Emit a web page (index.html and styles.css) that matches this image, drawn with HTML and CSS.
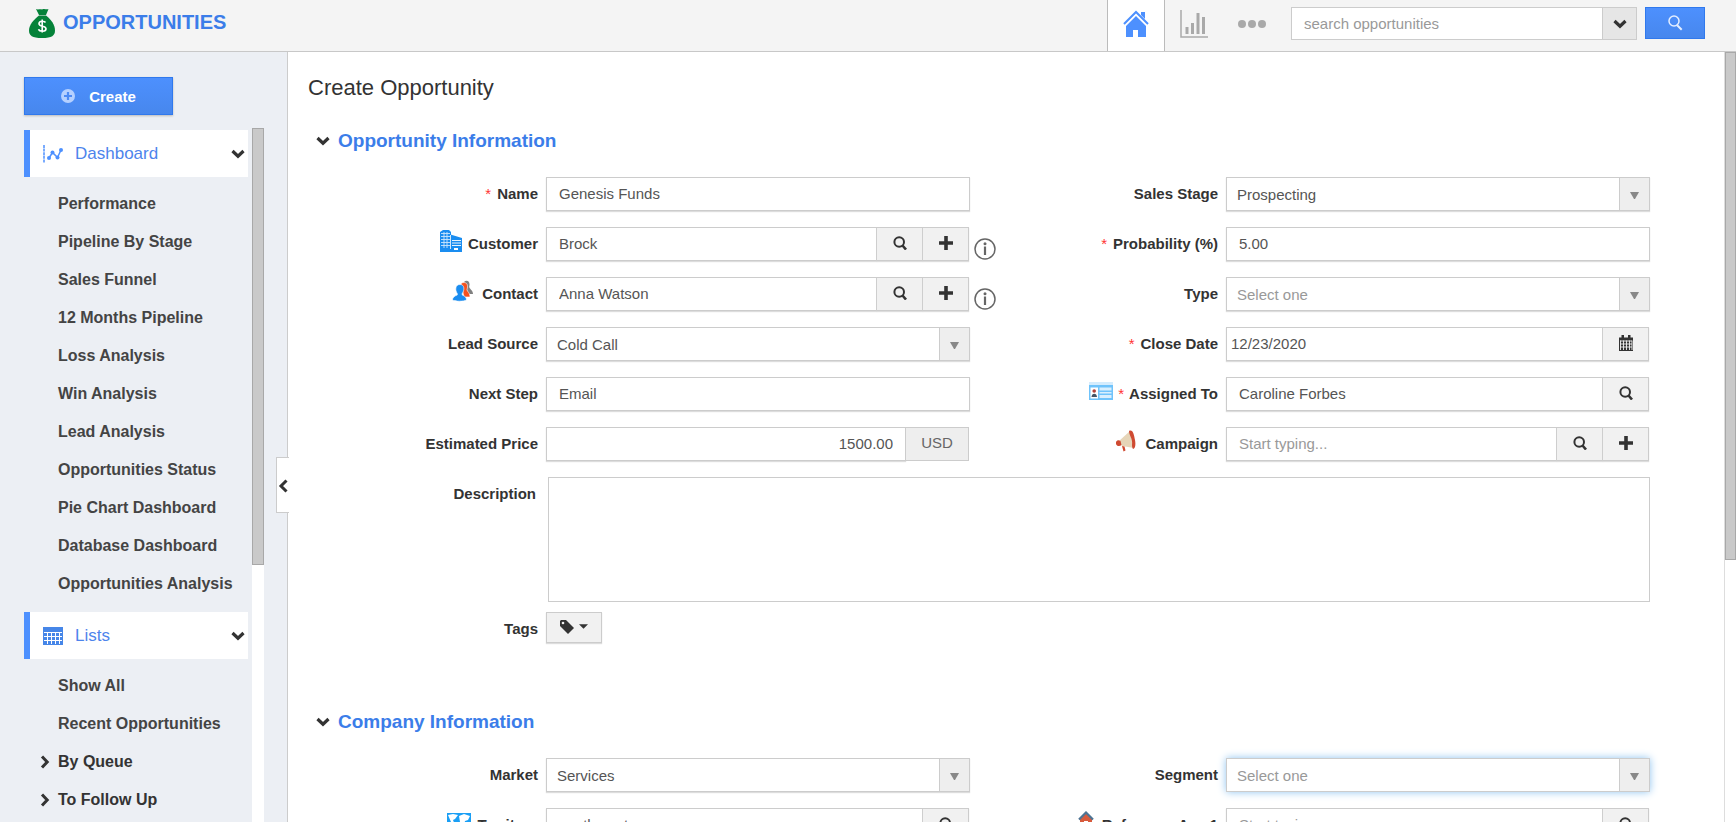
FILE: index.html
```html
<!DOCTYPE html>
<html lang="en">
<head>
<meta charset="utf-8">
<title>Create Opportunity</title>
<link rel="stylesheet" href="styles.css">
</head>
<body>
<svg class="sprite" aria-hidden="true">
  <symbol id="down" viewBox="0 0 14 10"><path d="M1.5 2 7 7.2 12.500 2" fill="none" stroke="#333" stroke-width="3.200"/></symbol>
  <symbol id="right" viewBox="0 0 10 14"><path d="M2 1.500 7.200 7 2 12.500" fill="none" stroke="#333" stroke-width="3"/></symbol>
  <symbol id="find" viewBox="0 0 14 14"><circle cx="6.200" cy="6" r="4.800" fill="none" stroke="#333" stroke-width="2"/><path d="m9.500 9.500 3.500 4" stroke="#333" stroke-width="2.600"/></symbol>
  <symbol id="plus" viewBox="0 0 14 14"><path d="M7 0v14M0 7h14" stroke="#333" stroke-width="3.600"/></symbol>
  <symbol id="info" viewBox="0 0 22 22"><circle cx="11" cy="11" r="10" fill="none" stroke="#666" stroke-width="1.500"/><circle cx="11" cy="5.800" r="1.500" fill="#666"/><path d="M11 8.500V17" stroke="#666" stroke-width="2.200"/></symbol>
</svg>
<header class="topbar">
  <div class="brand">
    <svg class="bag" viewBox="0 0 26 30"><path d="M7 1c2 1 3 0 6 .4C16 0 17 2 19.500 1L17 7H10z" fill="#058239"/><path d="M10 7.500h7c5 4 9 9 9 15 0 5-3 7.500-13 7.500S0 27.500 0 22.500c0-6 5-11 10-15z" fill="#058239"/><path d="M16.500 14.500c-1-1.800-6.500-2-6.500 1.200 0 3.300 7 1.800 7 5 0 3.400-6.500 3.300-7.500.6M13.200 11.500v13" fill="none" stroke="#fff" stroke-width="1.600"/></svg>
    <span class="brand-name">OPPORTUNITIES</span>
  </div>
  <nav class="tabs">
    <a class="tab active" href="#" aria-label="Home"><svg class="i-home" viewBox="0 0 28 28"><path d="m2 14 12-12 12 12" fill="none" stroke="#4d90fe" stroke-width="2"/><path d="M19 2h4v7l-4-4z" fill="#4d90fe"/><path d="M14 6 4 16v11h7v-7h5v7h8V16z" fill="#4d90fe"/></svg></a>
    <a class="tab" href="#" aria-label="Reports"><svg class="i-home" viewBox="0 0 28 28"><path d="M1 0v27h27" fill="none" stroke="#a9a9a9" stroke-width="1.500"/><path d="M7 24v-7M12.500 24V13M18 24V3M23.500 24V7" stroke="#a9a9a9" stroke-width="3"/></svg></a>
    <a class="tab" href="#" aria-label="More"><svg class="i-home" viewBox="0 0 28 28"><g fill="#a9a9a9"><circle cx="4" cy="14" r="4"/><circle cx="14" cy="14" r="4"/><circle cx="24" cy="14" r="4"/></g></svg></a>
  </nav>
  <form class="search">
    <input type="text" class="search-input" placeholder="search opportunities" aria-label="Search opportunities">
    <button type="button" class="search-menu" aria-label="Search options"><svg class="i-down" viewBox="0 0 14 10"><use href="#down"/></svg></button>
    <button type="button" class="search-go" aria-label="Search"><svg class="i-16" viewBox="0 0 16 16"><circle cx="7" cy="6" r="5" fill="none" stroke="#e4eeff" stroke-width="1.500"/><path d="m10.200 10.200 4.500 4.500" stroke="#e4eeff" stroke-width="2"/></svg></button>
  </form>
</header>
<div class="body">
  <aside class="sidebar">
    <button type="button" class="create"><svg class="i-14" viewBox="0 0 14 14"><circle cx="7" cy="7" r="7" fill="#b5d0ff"/><path d="M7 3v8M3 7h8" stroke="#4d8bf5" stroke-width="2.200"/></svg>Create</button>
    <div class="menu-scroll">
      <nav class="menu">
        <a class="group" href="#"><svg class="i-20" viewBox="0 0 20 20"><path d="M1 1v18" stroke="#4d90fe" stroke-width="1.500" stroke-dasharray="3 .6"/><path d="m6 14 3.500-5.500 5 5L18 6" fill="none" stroke="#4d90fe" stroke-width="1.500"/><g fill="#4d90fe"><circle cx="6" cy="14" r="2"/><circle cx="9.500" cy="8.500" r="2"/><circle cx="14.500" cy="13.500" r="2"/><circle cx="18" cy="6" r="2"/></g></svg><span class="group-name">Dashboard</span><svg class="i-down" viewBox="0 0 14 10"><use href="#down"/></svg></a>
        <div class="items">
          <a class="item" href="#">Performance</a>
          <a class="item" href="#">Pipeline By Stage</a>
          <a class="item" href="#">Sales Funnel</a>
          <a class="item" href="#">12 Months Pipeline</a>
          <a class="item" href="#">Loss Analysis</a>
          <a class="item" href="#">Win Analysis</a>
          <a class="item" href="#">Lead Analysis</a>
          <a class="item" href="#">Opportunities Status</a>
          <a class="item" href="#">Pie Chart Dashboard</a>
          <a class="item" href="#">Database Dashboard</a>
          <a class="item" href="#">Opportunities Analysis</a>
        </div>
        <a class="group" href="#"><svg class="i-20" viewBox="0 0 20 20"><path d="M0 1h20v18H0z" fill="#4686e8"/><path d="M1 6.500h18M1 10.500h18M1 14.500h18M4.500 6v12M8.500 6v12M12.500 6v12M16.500 6v12" stroke="#fff" stroke-width="1"/></svg><span class="group-name">Lists</span><svg class="i-down" viewBox="0 0 14 10"><use href="#down"/></svg></a>
        <div class="items">
          <a class="item" href="#">Show All</a>
          <a class="item" href="#">Recent Opportunities</a>
          <a class="item parent" href="#"><svg class="i-right" viewBox="0 0 10 14"><use href="#right"/></svg>By Queue</a>
          <a class="item parent" href="#"><svg class="i-right" viewBox="0 0 10 14"><use href="#right"/></svg>To Follow Up</a>
        </div>
      </nav>
      <div class="track side-track"><div class="thumb side-thumb"></div></div>
    </div>
    <button type="button" class="collapse" aria-label="Collapse sidebar"><svg class="i-right" viewBox="0 0 10 14"><path d="M8.500 1.500 3 7l5.500 5.500" fill="none" stroke="#333" stroke-width="3"/></svg></button>
  </aside>
  <main class="main">
    <form class="content">
      <h1 class="title">Create Opportunity</h1>
      <h2 class="section"><svg class="i-down" viewBox="0 0 14 10"><use href="#down"/></svg>Opportunity Information</h2>
      <div class="grid">
        <div class="row"><label class="label" for="name"><span class="req">*</span>Name</label><div class="control"><input class="input" id="name" type="text" value="Genesis Funds"></div></div>
        <div class="row"><label class="label" for="stage">Sales Stage</label><div class="control"><select class="input" id="stage"><option>Prospecting</option></select></div></div>

        <div class="row"><label class="label" for="customer"><svg class="i-22" viewBox="0 0 22 22"><path d="M0 2 3 0h6l2 2v19H0z" fill="#1a8df0"/><path d="M1 3.500h9M1 6.500h9M1 9.500h9M1 12.500h9M1 15.500h9M4 2v16M7 2v16" stroke="#cbe5fc" stroke-width=".9"/><path d="M10.500 4.500 22 8v13H10.500z" fill="#1a8df0"/><path d="M12 10.500h9M12 13h9M12 15.500h9" stroke="#e6f3fe" stroke-width="1"/><path d="M10.500 5v14" stroke="#fff" stroke-width=".8"/><path d="M14 18h4v3h-4z" fill="#fff"/><path d="M0 20h22v2H0z" fill="#1a8df0"/></svg>Customer</label><div class="control joined"><input class="input" id="customer" type="text" value="Brock"><button type="button" class="addon" aria-label="Find customer"><svg class="i-14" viewBox="0 0 14 14"><use href="#find"/></svg></button><button type="button" class="addon" aria-label="Add customer"><svg class="i-14" viewBox="0 0 14 14"><use href="#plus"/></svg></button><a class="hint" href="#" aria-label="Customer details"><svg class="i-22" viewBox="0 0 22 22"><use href="#info"/></svg></a></div></div>
        <div class="row"><label class="label" for="prob"><span class="req">*</span>Probability (%)</label><div class="control"><input class="input" id="prob" type="text" value="5.00"></div></div>

        <div class="row"><label class="label spaced" for="contact"><svg class="i-22" viewBox="0 0 22 22"><g fill="#808080"><ellipse cx="14.500" cy="4.500" rx="3" ry="3.800"/><path d="M14.500 7 17 6c0 3 4 4 4 8h-5z"/></g><g fill="#f4511e" stroke="#fff" stroke-width=".6"><path d="M12 2.500c3.500 0 4.200 3.500 3 7 0 2 3 3 3 7.500h-6L9 4c.5-1 1.500-1.500 3-1.500z"/></g><g fill="#1a8df0" stroke="#fff" stroke-width=".6"><path d="M8 4.500c5 0 4.500 6 2.200 9v1.500c2.800 1 4.300 2.500 4.300 5-3 1.600-11.500 1.600-14 0 0-2.500 2-4 4.800-5v-1.500C3 10.500 3 4.500 8 4.500z"/></g></svg>Contact</label><div class="control joined"><input class="input" id="contact" type="text" value="Anna Watson"><button type="button" class="addon" aria-label="Find contact"><svg class="i-14" viewBox="0 0 14 14"><use href="#find"/></svg></button><button type="button" class="addon" aria-label="Add contact"><svg class="i-14" viewBox="0 0 14 14"><use href="#plus"/></svg></button><a class="hint" href="#" aria-label="Contact details"><svg class="i-22" viewBox="0 0 22 22"><use href="#info"/></svg></a></div></div>
        <div class="row"><label class="label" for="type">Type</label><div class="control"><select class="input empty" id="type"><option>Select one</option></select></div></div>

        <div class="row"><label class="label" for="lead">Lead Source</label><div class="control"><select class="input" id="lead"><option>Cold Call</option></select></div></div>
        <div class="row"><label class="label" for="close"><span class="req">*</span>Close Date</label><div class="control joined"><input class="input date" id="close" type="text" value="12/23/2020"><button type="button" class="addon" aria-label="Pick date"><svg class="i-16" viewBox="0 0 16 16"><path d="M1 2.500h14V16H1zM3.500 0H6v4H3.500zM10 0h2.500v4H10z" fill="#333"/><path d="M2 6h12M2 9h12M2 12h12M2.500 5.500V15M5.500 5.500V15M8.500 5.500V15M11.500 5.500V15M14 5.500V15" stroke="#f1f1f1" stroke-width=".9"/></svg></button></div></div>

        <div class="row"><label class="label" for="next">Next Step</label><div class="control"><input class="input" id="next" type="text" value="Email"></div></div>
        <div class="row"><label class="label tight" for="assigned"><svg class="i-card" viewBox="0 0 24 18"><path d="M0 0h24v4H0z" fill="#d4ecfd"/><path d="M0 3h24v15H0z" fill="#6fc3fb"/><path d="M1.500 5.500H9v11H1.500z" fill="#fff"/><path d="M10.500 5.500h12v3h-12zM10.500 10h12v1.500h-12zM10.500 13h12v3h-12z" fill="#d9effe"/><circle cx="5.200" cy="9" r="1.800" fill="#b0413a"/><path d="M2.500 15c0-4.500 5.500-4.500 5.500 0z" fill="#456"/></svg><span class="req">*</span>Assigned To</label><div class="control joined"><input class="input" id="assigned" type="text" value="Caroline Forbes"><button type="button" class="addon" aria-label="Find user"><svg class="i-14" viewBox="0 0 14 14"><use href="#find"/></svg></button></div></div>

        <div class="row"><label class="label" for="price">Estimated Price</label><div class="control joined"><input class="input price" id="price" type="text" value="1500.00"><span class="unit">USD</span></div></div>
        <div class="row"><label class="label spaced" for="campaign"><svg class="i-22" viewBox="0 0 22 22"><path d="M4 11 15 1l4 17-12-2z" fill="#e6d5b8"/><path d="M14 1c4-2 5 4 6 9s0 9-2 9c-2-3 0-6-1.500-10C15.500 6 14 4 14 1z" fill="#cf4a31"/><path d="M1 12c1-2 3-2 4.500-1l1 4c-2 2-5 1-5.500-1zM7 16l2.500.5 1 4-2 1z" fill="#cf4a31"/></svg>Campaign</label><div class="control joined"><input class="input" id="campaign" type="text" placeholder="Start typing..."><button type="button" class="addon" aria-label="Find campaign"><svg class="i-14" viewBox="0 0 14 14"><use href="#find"/></svg></button><button type="button" class="addon" aria-label="Add campaign"><svg class="i-14" viewBox="0 0 14 14"><use href="#plus"/></svg></button></div></div>

        <div class="row wide describe"><label class="label" for="desc">Description</label><textarea class="area" id="desc"></textarea></div>
        <div class="row wide tags"><span class="label">Tags</span><button type="button" class="tag-button" aria-label="Choose tags"><svg class="i-14" viewBox="0 0 14 14"><path d="M0 1 1 0h5l8 8-6 6-8-8z" fill="#333"/><circle cx="3" cy="3" r="1.300" fill="#f1f1f1"/></svg><svg class="i-caret" viewBox="0 0 10 5"><path d="M0 0h10L5 5z" fill="#333"/></svg></button></div>
      </div>
      <h2 class="section second"><svg class="i-down" viewBox="0 0 14 10"><use href="#down"/></svg>Company Information</h2>
      <div class="grid">
        <div class="row"><label class="label" for="market">Market</label><div class="control"><select class="input" id="market"><option>Services</option></select></div></div>
        <div class="row"><label class="label" for="segment">Segment</label><div class="control"><select class="input empty focused" id="segment"><option>Select one</option></select></div></div>
        <div class="row"><label class="label" for="territory"><svg class="i-card" viewBox="0 0 24 18"><path d="M0 0h24v18H0z" fill="#1a9ff5"/><path d="M1 2l5-1 5 1-3 4-2 1 2 5-1 4-3-7zM12 3l5-2 6 2-2 4-3 1-1 4-2 3-2-6z" fill="#fff"/></svg>Territory</label><div class="control joined"><input class="input" id="territory" type="text" value="south east"><button type="button" class="addon" aria-label="Find territory"><svg class="i-14" viewBox="0 0 14 14"><use href="#find"/></svg></button></div></div>
        <div class="row"><label class="label tight" for="ref"><svg class="i-22" viewBox="0 0 22 22"><path d="M5 7h12v15H5z" fill="#d75a3c"/><path d="M9 10h4v12H9z" fill="#fff"/><path d="m4 8.500 7-7 7 7" fill="#d75a3c" stroke="#4d7494" stroke-width="2.200"/></svg>Reference Acc 1</label><div class="control joined"><input class="input" id="ref" type="text" placeholder="Start typing..."><button type="button" class="addon" aria-label="Find account"><svg class="i-14" viewBox="0 0 14 14"><use href="#find"/></svg></button></div></div>
      </div>
    </form>
    <div class="track main-track"><div class="thumb main-thumb"></div></div>
  </main>
</div>
</body>
</html>
```

FILE: styles.css
```css
* { box-sizing: border-box; }

body {
  margin: 0;
  height: 100vh;
  display: flex;
  flex-direction: column;
  overflow: hidden;
  background: #fff;
  color: #333;
  font-family: "Liberation Sans", Arial, sans-serif;
  font-size: 15px;
}

a { color: inherit; text-decoration: none; }
svg { flex: none; display: block; }
button, input, select, textarea { font: inherit; color: inherit; border-radius: 0; margin: 0; }
button { display: flex; align-items: center; justify-content: center; padding: 0; }

.sprite { position: absolute; width: 0; height: 0; }
.i-14 { width: 14px; height: 14px; }
.i-16 { width: 16px; height: 16px; }
.i-20 { width: 20px; height: 20px; }
.i-22 { width: 22px; height: 22px; }
.i-home { width: 28px; height: 28px; }
.i-card { width: 24px; height: 18px; }
.i-down { width: 14px; height: 10px; }
.i-right { width: 10px; height: 14px; }
.i-caret { width: 9px; height: 5px; }

/* Top bar */
.topbar {
  flex: none;
  display: flex;
  height: 52px;
  padding-right: 31px;
  background: #f4f4f4;
  border-bottom: 1px solid #c8c8c8;
}
.brand { display: flex; align-items: flex-start; gap: 8px; padding: 8px 0 0 29px; }
.bag { width: 26px; height: 30px; }
.brand-name { color: #3b7de9; font-size: 20px; font-weight: bold; line-height: 28px; }
.tabs { display: flex; margin-left: auto; }
.tab {
  display: flex;
  align-items: center;
  justify-content: center;
  width: 58px;
  padding-bottom: 4px;
}
.active { background: #fff; border: 1px solid #bbb; border-width: 0 1px; }
.search { display: flex; align-items: flex-start; padding-top: 7px; margin-left: 10px; }
.search-input { width: 312px; height: 33px; padding: 0 12px; border: 1px solid #ccc; background: #fff; }
.search-menu { width: 34px; height: 33px; border: 1px solid #ccc; border-left: 0; background: #e6e6e6; }
.search-go {
  width: 60px;
  height: 32px;
  margin-left: 8px;
  border: 1px solid #3079ed;
  background: linear-gradient(#4d90fe, #4787ed);
}
::placeholder { color: #999; opacity: 1; }

/* Sidebar */
.body { flex: 1; display: flex; min-height: 0; }
.sidebar {
  position: relative;
  flex: none;
  display: flex;
  flex-direction: column;
  width: 288px;
  padding: 25px 23px 0 24px;
  background: #eceff4;
  border-right: 1px solid #ccc;
}
.create {
  width: 149px;
  height: 38px;
  gap: 14px;
  flex: none;
  border: 1px solid #3079ed;
  background: linear-gradient(#4d90fe, #4787ed);
  box-shadow: 0 1px 2px #bbb;
  color: #fff;
  font-weight: bold;
}
.menu-scroll { flex: 1; min-height: 0; display: flex; justify-content: space-between; margin-top: 13px; }
.menu { width: 224px; padding-top: 2px; overflow: hidden; }
.group {
  display: flex;
  align-items: center;
  height: 47px;
  padding: 0 3px 0 13px;
  border-left: 6px solid #4d90fe;
  background: #fff;
  color: #4d84ec;
  font-size: 17px;
}
.group-name { flex: 1; padding-left: 12px; }
.items { padding: 8px 0 9px; }
.item {
  display: flex;
  align-items: center;
  height: 38px;
  padding-left: 34px;
  font-size: 16px;
  font-weight: bold;
  color: #444;
  white-space: nowrap;
}
.parent { gap: 8px; padding-left: 16px; color: #333; }
.track { width: 12px; background: #fff; }
.thumb { background: #c9c9c9; border: 1px solid #a8a8a8; }
.side-thumb { height: 63%; }
.collapse {
  position: absolute;
  top: 405px;
  right: -2px;
  width: 13px;
  height: 56px;
  padding-top: 2px;
  border: 1px solid #ccc;
  border-right: 0;
  background: #fff;
}

/* Form */
.main { flex: 1; min-width: 0; display: flex; }
.content { flex: 1; min-width: 0; overflow: hidden; }
.title { margin: 0; padding: 20px 0 0 20px; font-size: 22px; font-weight: normal; line-height: 32px; }
.section {
  display: flex;
  align-items: center;
  gap: 8px;
  margin: 0;
  padding: 24px 0 0 28px;
  color: #3b7de9;
  font-size: 19px;
  line-height: 26px;
}
.second { padding-top: 63px; }
.grid {
  display: grid;
  grid-template-columns: 1fr 1fr;
  gap: 16px 0;
  padding: 23px 74px 0 2px;
}
.row { display: flex; gap: 8px; min-width: 0; }
.wide { grid-column: 1 / -1; }
.label {
  flex: none;
  display: flex;
  align-items: center;
  justify-content: flex-end;
  gap: 6px;
  width: 248px;
  height: 34px;
  padding-bottom: 2px;
  font-weight: bold;
}
.spaced { gap: 8px; }
.tight { gap: 5px; }
.label .i-22, .label .i-card { margin-bottom: 4px; }
.req { color: #f33; font-weight: normal; }
.control { position: relative; flex: 1; min-width: 0; display: flex; }
.joined { padding-right: 1px; }
.input {
  flex: 1;
  min-width: 0;
  height: 34px;
  padding: 0 12px 2px;
  border: 1px solid #ccc;
  background: #fff;
  box-shadow: 0 1px 1px #ddd;
  color: #555;
}
select.input {
  appearance: none;
  padding: 0 40px 0 10px;
  background:
    url("data:image/svg+xml,%3Csvg xmlns='http://www.w3.org/2000/svg' width='30' height='32'%3E%3Cpath d='M0 0h30v32H0z' fill='%23eee'/%3E%3Cpath d='M0 0h1v32H0z' fill='%23ccc'/%3E%3Cpath d='M11 14h9l-4 7h-1z' fill='%23888'/%3E%3C/svg%3E") right center no-repeat #fff;
}
.empty.input { color: #999; }
.focused.input { box-shadow: 0 0 8px #8fc4f0; }
.input.date { padding: 0 4px 2px; }
.price { text-align: right; }
.addon {
  width: 46px;
  padding-bottom: 2px;
  border: 1px solid #ccc;
  border-left: 0;
  background: #f1f1f1;
  box-shadow: 0 1px 1px #ddd;
}
.unit {
  display: flex;
  align-items: center;
  justify-content: center;
  width: 63px;
  padding-bottom: 4px;
  border: 1px solid #ccc;
  border-left: 0;
  background: #eee;
  color: #666;
}
.hint { position: absolute; left: 100%; top: 11px; margin-left: 4px; }
.describe { gap: 12px; }
.describe .label { width: 246px; }
.area { flex: 1; height: 125px; border: 1px solid #ccc; resize: none; background: #fff; }
.tags { margin-top: -6px; }
.tag-button {
  width: 56px;
  height: 31px;
  gap: 5px;
  padding-bottom: 2px;
  border: 1px solid #ccc;
  background: #f1f1f1;
  box-shadow: 0 1px 1px #ddd;
}
.main-track { border-left: 1px solid #ddd; }
.main-thumb { height: 66%; }
```
